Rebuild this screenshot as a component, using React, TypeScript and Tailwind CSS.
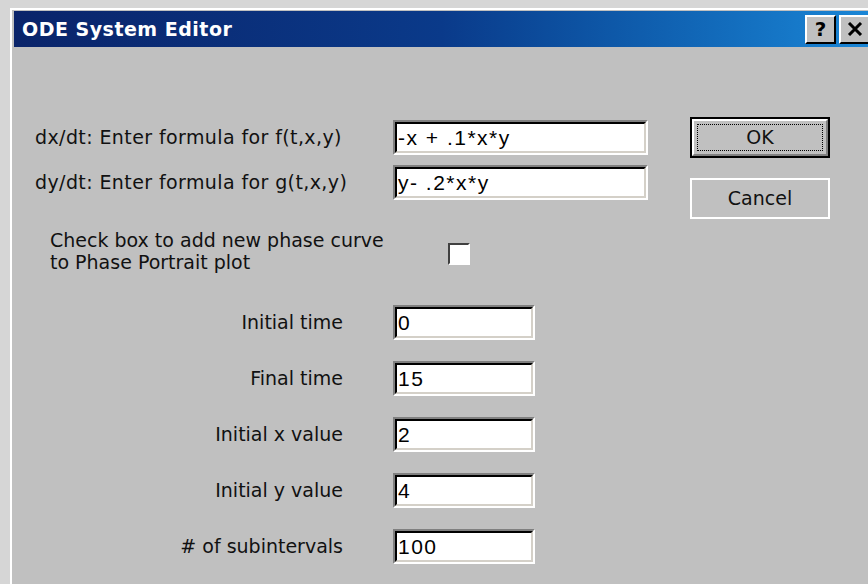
import React from 'react';

const uiFont = { fontFamily: '"DejaVu Sans", "Liberation Sans", sans-serif' };
const editFont = { fontFamily: '"Liberation Sans", Arial, sans-serif' };

// Win2k-style sunken edit box
const EditBox: React.FC<{ value: string; className?: string }> = ({ value, className = '' }) => (
  <div className={`h-[35px] border-t-2 border-l-2 border-t-[#808080] border-l-[#808080] border-b-2 border-r-2 border-b-white border-r-white ${className}`}>
    <div className="h-full border-t-2 border-l-2 border-t-black border-l-black border-b-2 border-r-2 border-b-[#d4d0c8] border-r-[#d4d0c8] bg-white flex items-center pl-[1px]">
      <span className="text-[21px] tracking-[1.5px] text-black leading-none whitespace-pre" style={editFont}>{value}</span>
    </div>
  </div>
);

const CaptionButton: React.FC<{ children: React.ReactNode }> = ({ children }) => (
  <div className="w-[31px] h-[29px] bg-[#c0c0c0] border-t-2 border-l-2 border-white border-b-2 border-r-2 border-b-black border-r-black flex items-center justify-center">
    {children}
  </div>
);

const SmallRow: React.FC<{ label: string; value: string }> = ({ label, value }) => (
  <div className="flex items-center h-[35px] mb-[21px]">
    <div className="w-[308px] text-right text-[19px] text-[#111]">{label}</div>
    <EditBox value={value} className="ml-[50px] w-[142px]" />
  </div>
);

export default function App() {
  return (
    <div className="w-[868px] h-[584px] overflow-hidden bg-[#d6d6d6] pl-[10px] pt-[8px]" style={uiFont}>
      <div className="h-[600px] border-t-2 border-l-2 border-white bg-[#c0c0c0] pl-[2px] pt-[1px]">
        {/* caption bar */}
        <div className="h-[36px] flex items-center justify-between bg-gradient-to-r from-[#0a246a] via-[#0a3a8a] to-[#1a86d6] pl-[8px]">
          <span className="text-white font-bold text-[19px] tracking-[0.5px]">ODE System Editor</span>
          <div className="flex gap-[3px] mr-[-2px]">
            <CaptionButton>
              <span className="text-black font-bold text-[20px] leading-none">?</span>
            </CaptionButton>
            <CaptionButton>
              <svg width="16" height="14" viewBox="0 0 16 14">
                <path d="M2 1 L14 13 M14 1 L2 13" stroke="black" strokeWidth="3" />
              </svg>
            </CaptionButton>
          </div>
        </div>

        {/* dialog body */}
        <div className="flex pl-[21px] pt-[73px]">
          <div className="w-[655px]">
            <div className="flex items-center h-[35px]">
              <div className="w-[358px] text-[19px] tracking-[0.4px] text-[#111]">dx/dt: Enter formula for f(t,x,y)</div>
              <EditBox value="-x + .1*x*y" className="w-[255px]" />
            </div>
            <div className="flex items-center h-[35px] mt-[10px]">
              <div className="w-[358px] text-[19px] tracking-[0.4px] text-[#111]">dy/dt: Enter formula for g(t,x,y)</div>
              <EditBox value="y- .2*x*y" className="w-[255px]" />
            </div>
            <div className="flex items-center mt-[29px]">
              <div className="w-[413px] pl-[15px] text-[19px] text-[#111] leading-[22px]">
                Check box to add new phase curve
                <br />
                to Phase Portrait plot
              </div>
              <div className="w-[22px] h-[22px] mt-[6px] border-t-2 border-l-2 border-t-[#404040] border-l-[#404040] border-b-2 border-r-2 border-b-white border-r-white bg-white" />
            </div>
            <div className="mt-[32px]">
              <SmallRow label="Initial time" value="0" />
              <SmallRow label="Final time" value="15" />
              <SmallRow label="Initial x value" value="2" />
              <SmallRow label="Initial y value" value="4" />
              <SmallRow label="# of subintervals" value="100" />
            </div>
          </div>

          {/* command buttons */}
          <div className="flex flex-col">
            <div className="w-[140px] h-[41px] mt-[-3px] border-2 border-black">
              <div className="h-full bg-[#c0c0c0] border-t-2 border-l-2 border-white border-b-2 border-r-2 border-b-[#808080] border-r-[#808080] p-[3px]">
                <div className="h-full border border-dotted border-black flex items-center justify-center text-[19px] text-[#111]">
                  OK
                </div>
              </div>
            </div>
            <div className="w-[140px] h-[41px] mt-[20px] bg-[#c0c0c0] border-t-2 border-l-2 border-white border-b-2 border-r-2 border-black flex items-center justify-center text-[19px] text-[#111]">
              Cancel
            </div>
          </div>
        </div>
      </div>
    </div>
  );
}
